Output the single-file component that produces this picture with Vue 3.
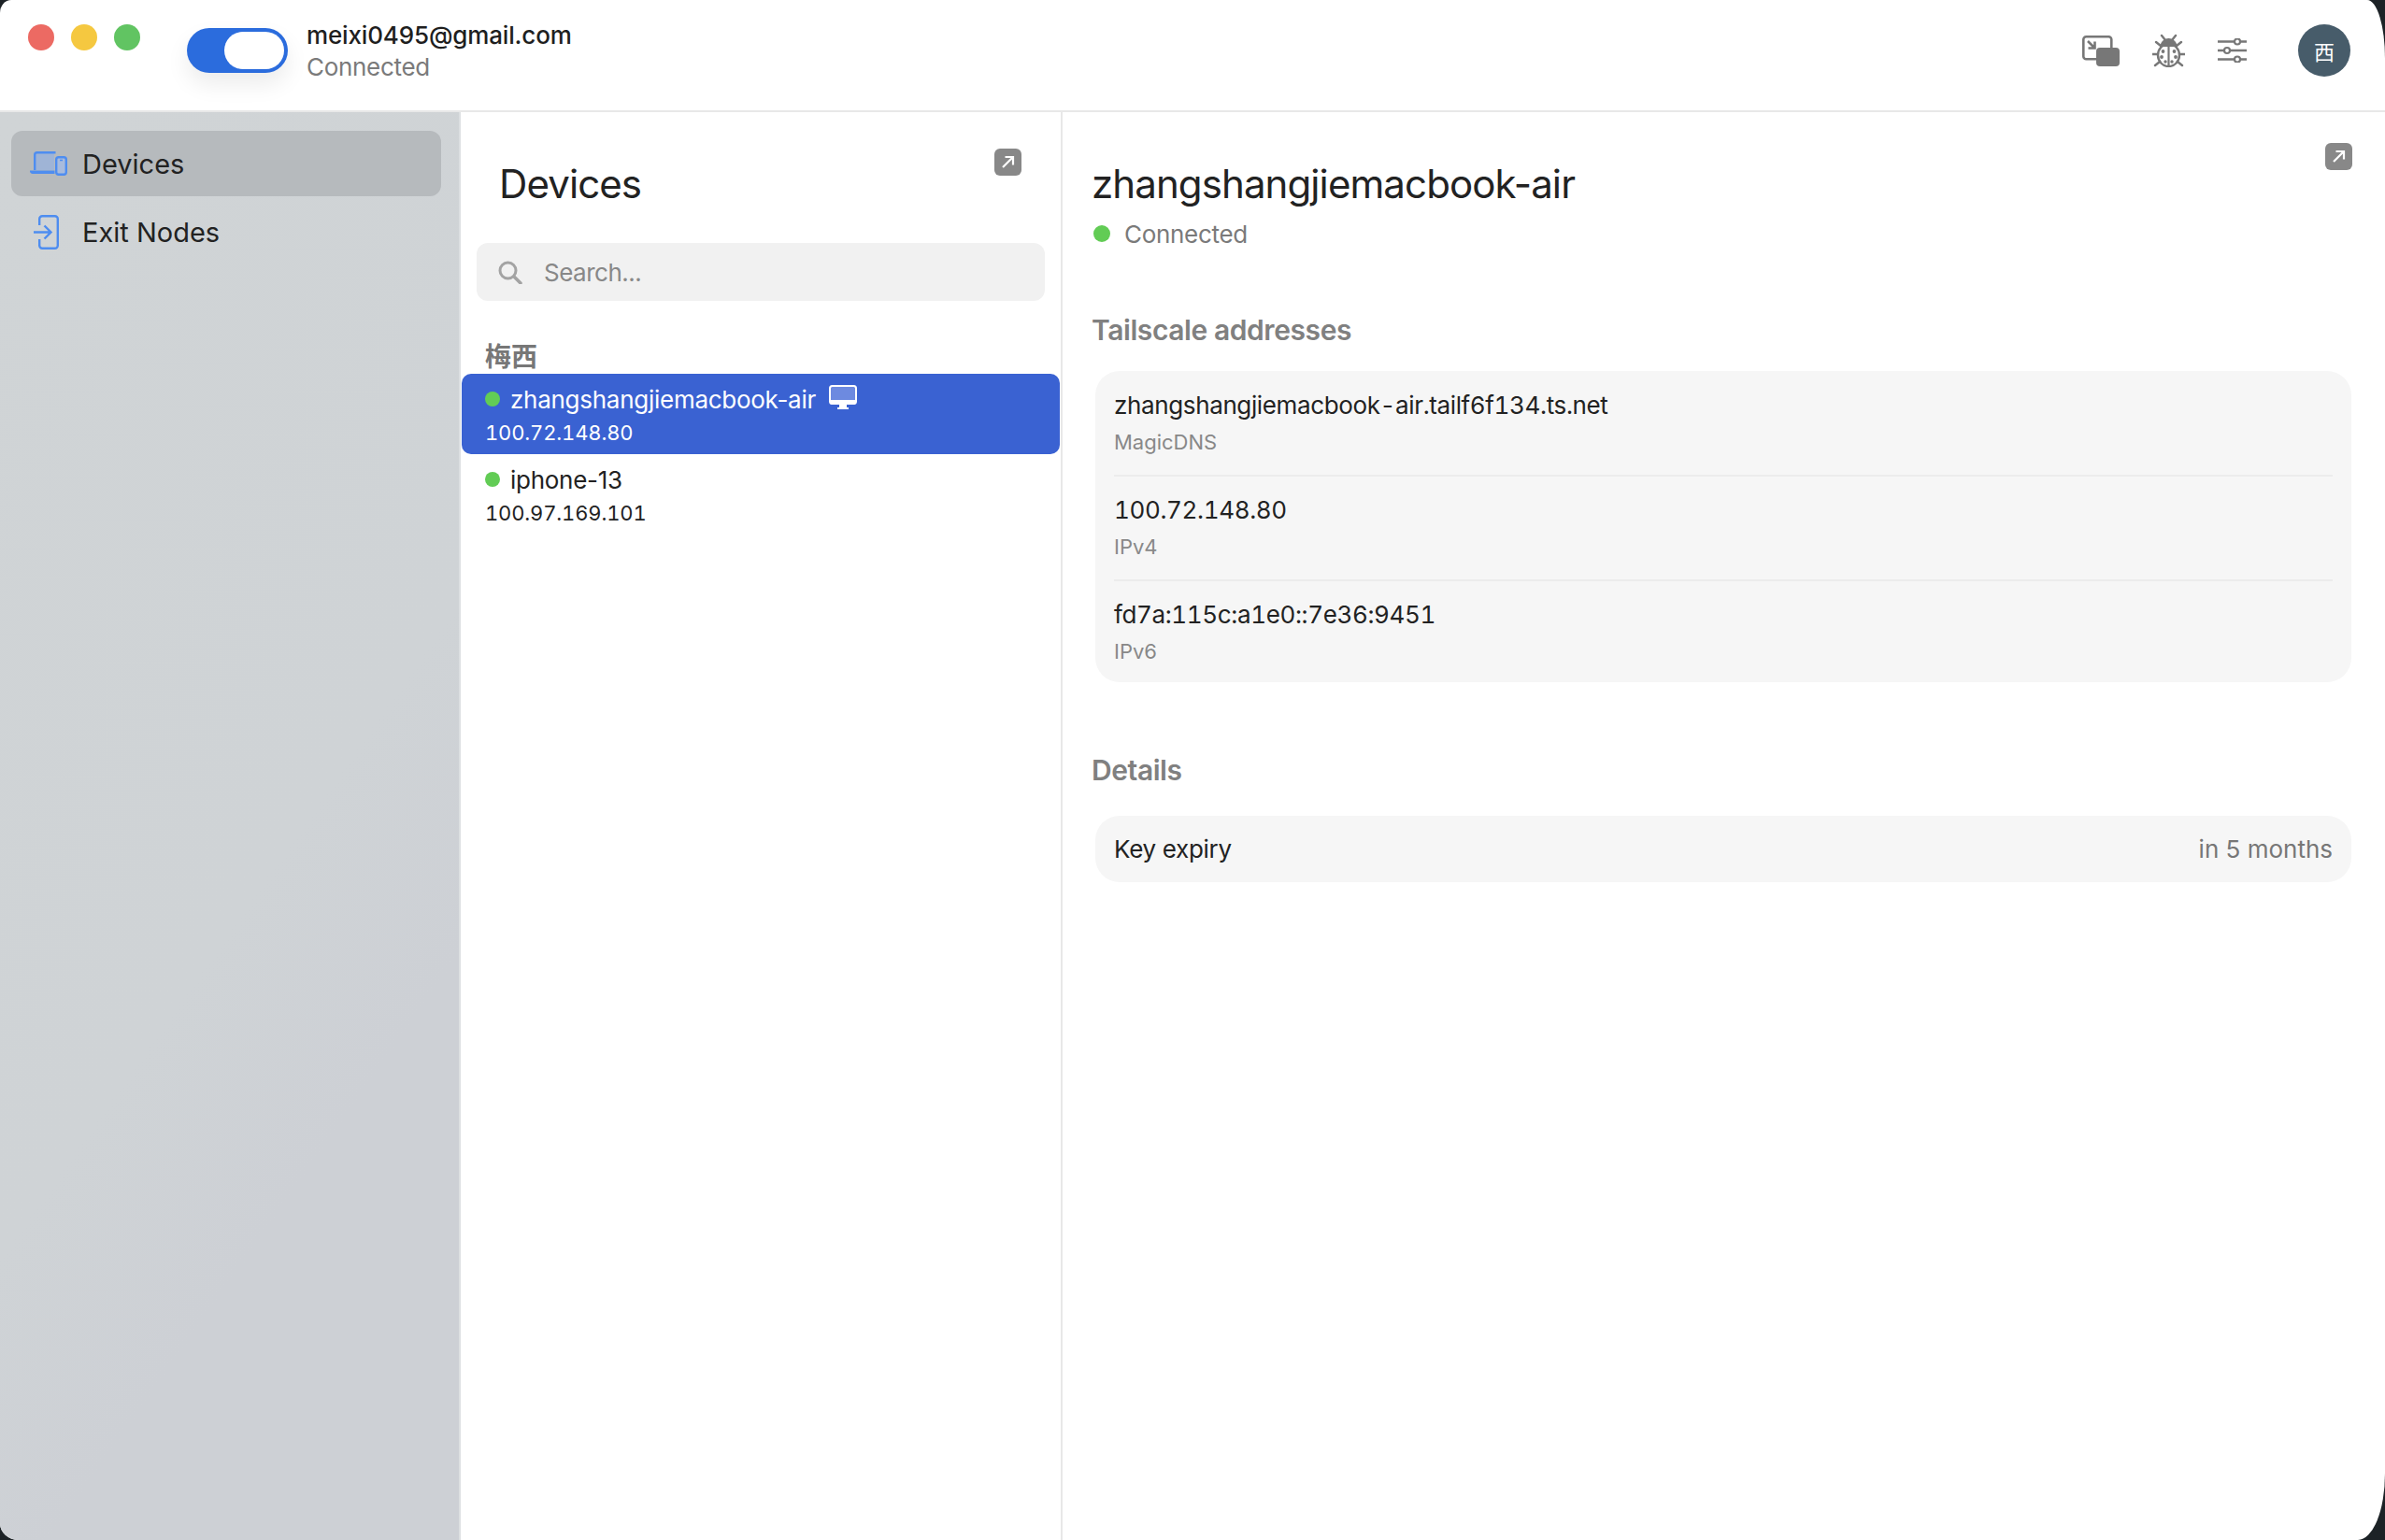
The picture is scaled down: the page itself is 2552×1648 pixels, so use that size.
<script setup>
const devices = [
  { name: 'zhangshangjiemacbook-air', ip: '100.72.148.80', active: true },
  { name: 'iphone-13', ip: '100.97.169.101', active: false },
]
const addresses = [
  { value: 'zhangshangjiemacbook-air.tailf6f134.ts.net', label: 'MagicDNS' },
  { value: '100.72.148.80', label: 'IPv4' },
  { value: 'fd7a:115c:a1e0::7e36:9451', label: 'IPv6' },
]
</script>

<template>
  <div class="window">
    <header class="topbar">
      <div class="lights">
        <span class="light red"></span>
        <span class="light yellow"></span>
        <span class="light green"></span>
      </div>
      <div class="toggle"><span class="knob"></span></div>
      <div class="account">
        <div class="email">meixi0495@gmail.com</div>
        <div class="account-status">Connected</div>
      </div>
      <div class="tools">
        <svg class="pip" width="40" height="33" viewBox="0 0 40 33">
          <rect x="1.300" y="1.300" width="30" height="24" rx="3" fill="none" stroke="#777" stroke-width="2.600" />
          <rect x="15" y="13" width="25" height="20" rx="4" fill="#777" />
          <path d="M6 6l7 7M13.500 6.500v7h-7" fill="none" stroke="#777" stroke-width="2.600" />
        </svg>
        <svg class="bug" width="35" height="36" viewBox="0 0 35 36">
          <path d="M10 2l4 5M25 2l-4 5M4 9l5 4M31 9l-5 4M0 22h6M29 22h6M3 34l5-4M32 34l-5-4" stroke="#777" stroke-width="2.400" stroke-linecap="round" fill="none" />
          <path d="M8.500 14c0-5 4-9 9-9s9 4 9 9z" fill="#777" />
          <ellipse cx="17.500" cy="23" rx="11.500" ry="12" fill="none" stroke="#777" stroke-width="2.400" />
          <path d="M17.500 13v22" stroke="#777" stroke-width="2.200" />
          <circle cx="11.500" cy="19" r="1.900" fill="#777" /><circle cx="23.500" cy="19" r="1.900" fill="#777" />
          <circle cx="10" cy="25" r="1.900" fill="#777" /><circle cx="25" cy="25" r="1.900" fill="#777" />
          <circle cx="14" cy="30" r="1.700" fill="#777" /><circle cx="21" cy="30" r="1.700" fill="#777" />
        </svg>
        <svg class="sliders" width="31" height="26" viewBox="0 0 31 26">
          <path d="M0 3.500h31M0 13h31M0 22.500h31" stroke="#777" stroke-width="2.400" />
          <circle cx="21" cy="3.500" r="3" fill="#fff" stroke="#777" stroke-width="2.200" />
          <circle cx="10" cy="13" r="3" fill="#fff" stroke="#777" stroke-width="2.200" />
          <circle cx="21" cy="22.500" r="3" fill="#fff" stroke="#777" stroke-width="2.200" />
        </svg>
        <div class="avatar">西</div>
      </div>
    </header>

    <div class="body">
      <nav class="sidebar">
        <a class="nav-item selected">
          <span class="nav-icon">
            <svg width="40" height="26" viewBox="0 0 40 26">
              <path d="M5 20V3.500A2.500 2.500 0 0 1 7.500 1H26v19z" fill="#8fb0e6" fill-opacity=".6" />
              <path d="M5.200 20V3.700A2.500 2.500 0 0 1 7.700 1.200H27.500" fill="none" stroke="#4e8df0" stroke-width="2.400" />
              <path d="M0 20.500h26.500v3.500H3a3 3 0 0 1-3-3.500z" fill="#4e8df0" />
              <rect x="28.200" y="6.200" width="10.600" height="18.600" rx="2.500" fill="#a8bbdc" stroke="#4e8df0" stroke-width="2.400" />
              <path d="M32 9.500h3" stroke="#4e8df0" stroke-width="1.400" />
            </svg>
          </span>
          <span>Devices</span>
        </a>
        <a class="nav-item">
          <span class="nav-icon exit-icon">
            <svg width="27" height="37" viewBox="0 0 27 37">
              <path d="M6.200 11V4.200a3 3 0 0 1 3-3h13.600a3 3 0 0 1 3 3v28.600a3 3 0 0 1-3 3H9.200a3 3 0 0 1-3-3V26" fill="none" stroke="#4e8df0" stroke-width="2.400" />
              <path d="M0 18.500h18M11.500 11.500l7 7-7 7" fill="none" stroke="#4e8df0" stroke-width="2.400" />
            </svg>
          </span>
          <span>Exit Nodes</span>
        </a>
      </nav>

      <section class="list-pane">
        <div class="list-head">
          <h1 class="list-title">Devices</h1>
          <button class="open-btn">
            <svg width="17" height="17" viewBox="0 0 17 17"><path d="M3 14L14 3M5.500 3H14v8.500" fill="none" stroke="#fff" stroke-width="2.200" /></svg>
          </button>
        </div>
        <div class="search">
          <svg width="26" height="25" viewBox="0 0 26 25">
            <circle cx="10.500" cy="10.500" r="8.500" fill="none" stroke="#a3a3a3" stroke-width="3" />
            <path d="M17 17l7 7" stroke="#a3a3a3" stroke-width="3.500" stroke-linecap="round" />
          </svg>
          <span>Search...</span>
        </div>
        <div class="group-label">梅西</div>
        <div v-for="d in devices" :key="d.name" class="device" :class="{ active: d.active }">
          <div class="device-name">
            <span class="dot"></span>
            <span>{{ d.name }}</span>
            <svg v-if="d.active" class="monitor" width="30" height="26" viewBox="0 0 30 26">
              <rect x="1" y="1" width="28" height="19" rx="2.500" fill="#6d8ae0" stroke="#fff" stroke-width="2" />
              <path d="M1 16h28v2a3 3 0 0 1-3 3H4a3 3 0 0 1-3-3z" fill="#fff" />
              <path d="M11 21h8v3h2v2H9v-2h2z" fill="#fff" />
            </svg>
          </div>
          <div class="device-ip">{{ d.ip }}</div>
        </div>
      </section>

      <main class="detail">
        <div class="detail-head">
          <h1 class="detail-title">zhangshangjiemacbook-air</h1>
          <button class="open-btn detail-open">
            <svg width="17" height="17" viewBox="0 0 17 17"><path d="M3 14L14 3M5.500 3H14v8.500" fill="none" stroke="#fff" stroke-width="2.200" /></svg>
          </button>
        </div>
        <div class="detail-status"><span class="dot big"></span>Connected</div>

        <h2 class="section addresses-head">Tailscale addresses</h2>
        <div class="card">
          <div v-for="a in addresses" :key="a.label" class="addr">
            <div class="addr-value">{{ a.value }}</div>
            <div class="addr-label">{{ a.label }}</div>
          </div>
        </div>

        <h2 class="section details-head">Details</h2>
        <div class="card expiry">
          <span class="expiry-key">Key expiry</span>
          <span class="expiry-value">in 5 months</span>
        </div>
      </main>
    </div>
  </div>
</template>

<style>
html, body { margin: 0; background: #1c2226; }
</style>

<style scoped>
.window {
  width: 2552px;
  height: 1648px;
  display: flex;
  flex-direction: column;
  overflow: hidden;
  background: #fff;
  border-radius: 12px 19px 29px 20px / 14px 62px 71px 18px;
  font-family: Inter, "Noto Sans CJK SC", sans-serif;
  color: #222;
}
.topbar {
  height: 118px;
  flex: none;
  display: flex;
  align-items: flex-start;
  padding: 0 37px 0 30px;
  border-bottom: 2px solid #e8e8e8;
}
.lights { display: flex; gap: 18px; margin-top: 26px; }
.light { width: 28px; height: 28px; border-radius: 50%; }
.red { background: #ec6a63; }
.yellow { background: #f5c840; }
.green { background: #61c462; }
.toggle {
  width: 108px;
  height: 48px;
  margin: 30px 0 0 50px;
  padding: 4px;
  box-sizing: border-box;
  display: flex;
  justify-content: flex-end;
  border-radius: 24px;
  background: #2b6cdd;
  box-shadow: 0 12px 24px rgba(0, 0, 0, .08);
}
.knob { width: 64px; height: 40px; border-radius: 20px; background: #fff; }
.account { margin: 21px 0 0 20px; }
.email { font-size: 26px; line-height: 34px; font-weight: 500; color: #1f1f1f; letter-spacing: -.15px; }
.account-status { font-size: 26px; line-height: 34px; color: #7a7a7a; letter-spacing: -.3px; }
.tools { margin: 26px 0 0 auto; height: 56px; display: flex; align-items: center; }
.pip { margin-right: 35px; }
.bug { margin-right: 35px; }
.sliders { margin-right: 55px; }
.avatar {
  width: 56px;
  height: 56px;
  border-radius: 50%;
  background: #475c6a;
  color: #fff;
  font-size: 22px;
  display: flex;
  align-items: center;
  justify-content: center;
}
.body { flex: 1; display: flex; min-height: 0; }
.sidebar {
  width: 493px;
  flex: none;
  padding: 20px 19px 0 12px;
  box-sizing: border-box;
  border-right: 2px solid #dde0e2;
  background: linear-gradient(125deg, #d0d4d6 0%, #cfd3d6 55%, #cdd0d5 72%, #cdd0d5 100%);
  display: flex;
  flex-direction: column;
  gap: 3px;
}
.nav-item {
  height: 70px;
  display: flex;
  align-items: center;
  gap: 16px;
  padding-left: 20px;
  border-radius: 12px;
  font-size: 29px;
  color: #222;
}
.nav-icon { width: 40px; display: flex; justify-content: center; }
.exit-icon { transform: translateX(-3px); }
.selected { background: #b6babd; }
.list-pane {
  width: 642px;
  flex: none;
  border-right: 2px solid #e8e8e8;
  display: flex;
  flex-direction: column;
}
.list-head { display: flex; justify-content: space-between; align-items: flex-start; padding: 0 42px 0 41px; }
.list-title { margin: 50px 0 0; font-size: 42px; line-height: 54px; font-weight: 400; color: #222; letter-spacing: -.9px; }
.open-btn {
  width: 29px;
  height: 29px;
  margin-top: 39px;
  padding: 0;
  border: 0;
  border-radius: 6px;
  background: #888;
  display: flex;
  align-items: center;
  justify-content: center;
}
.search {
  height: 62px;
  margin: 36px 17px 0 17px;
  padding-left: 23px;
  display: flex;
  align-items: center;
  gap: 23px;
  border-radius: 12px;
  background: #f1f1f1;
  color: #888;
  font-size: 26px;
  letter-spacing: -.5px;
}
.group-label { margin: 45px 0 3px 26px; font-size: 28px; line-height: 30px; font-weight: 700; color: #777; }
.device { height: 86px; margin: 0 1px; padding: 9px 0 0 25px; box-sizing: border-box; border-radius: 10px; }
.device.active { background: #3a62d2; color: #fff; }
.device-name { height: 36px; display: flex; align-items: center; font-size: 26px; letter-spacing: -.27px; }
.dot { width: 16px; height: 16px; border-radius: 50%; background: #62cc55; margin-right: 11px; flex: none; }
.monitor { margin: -4px 0 0 14px; }
.device-ip { margin-top: 2px; font-size: 22px; line-height: 32px; letter-spacing: -.15px; font-variant-numeric: tabular-nums; }
.detail { flex: 1; min-width: 0; padding: 0 35px 0 31px; }
.detail-head { display: flex; justify-content: space-between; align-items: flex-start; }
.detail-title { margin: 50px 0 0; font-size: 42px; line-height: 54px; font-weight: 400; color: #222; letter-spacing: -.9px; }
.detail-open { margin-top: 33px; }
.detail-status { margin-top: 8px; height: 36px; display: flex; align-items: center; font-size: 26px; color: #7a7a7a; letter-spacing: -.3px; }
.dot.big { width: 18px; height: 18px; margin: 0 15px 0 2px; }
.section { margin: 0; font-size: 30px; line-height: 36px; font-weight: 600; color: #808080; letter-spacing: -.42px; }
.addresses-head { margin-top: 67px; }
.details-head { margin-top: 76px; }
.card { margin: 26px 1px 0 4px; padding: 0 20px; background: #f6f6f6; border-radius: 26px; }
.addr { padding: 18px 0 20px; border-bottom: 2px solid #ececec; }
.addr:first-child { padding-top: 19px; }
.addr:last-child { padding-bottom: 18px; border-bottom: 0; }
.addr-value { font-size: 26px; line-height: 36px; color: #222; font-variant-numeric: tabular-nums; letter-spacing: -.37px; }
.addr-label { margin-top: 6px; font-size: 22px; line-height: 30px; color: #888; }
.expiry {
  margin-top: 31px;
  height: 71px;
  display: flex;
  align-items: center;
  justify-content: space-between;
  font-size: 26px;
}
.expiry-key { letter-spacing: -.3px; }
.expiry-value { color: #777; }
</style>
